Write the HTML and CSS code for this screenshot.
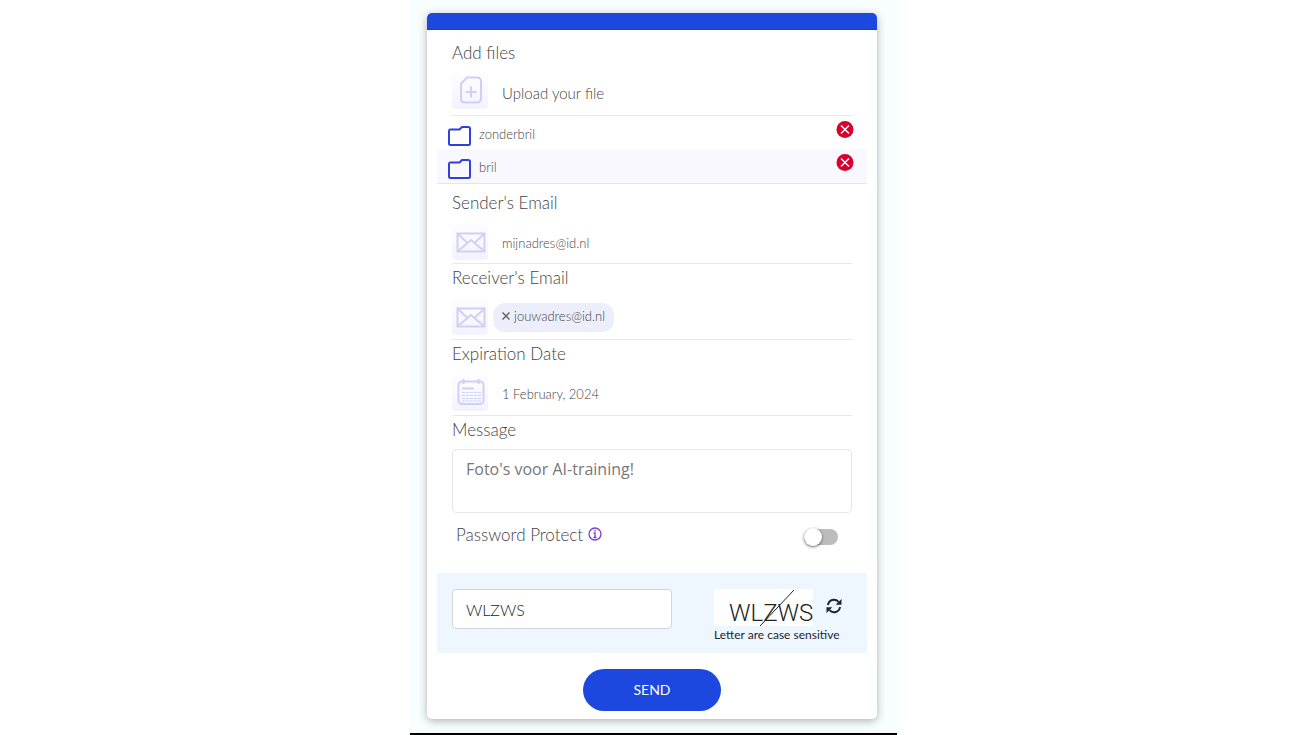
FILE: index.html
```html
<!DOCTYPE html>
<html lang="en">
<head>
    <meta charset="utf-8">
    <meta name="viewport" content="width=device-width,initial-scale=1.0">
    <title>Send files</title>
    <link rel="stylesheet" href="styles.css">
</head>
<body>
<!-- shared icons -->
<svg class="sprite" aria-hidden="true">
    <symbol id="mail" viewBox="0 0 36 36">
        <rect x="5.5" y="9.5" width="27" height="18"/>
        <path d="M6 10l9.500 9 3.500-3 3.500 3L32 10M6 27l9.500-8M32 27l-9.500-8"/>
    </symbol>
    <symbol id="folder" viewBox="0 0 24 22">
        <path d="M3 4.500h9.500l2.500-2.500h6Q23 2 23 3.500V18.500Q23 20 21.500 20H3.500Q2 20 2 18.500V6Q2 4.500 3 4.500z"/>
    </symbol>
    <symbol id="remove" viewBox="0 0 18 18">
        <circle cx="9" cy="8.500" r="8.500" fill="#d9002b"/>
        <path d="M5 4.500l8 8M13 4.500l-8 8" stroke="#fff" stroke-width="1.500"/>
    </symbol>
</svg>

<main class="wrap">
    <form class="card">
        <div class="card-top"></div>
        <div class="card-body">

            <div class="field field-upload">
                <h2 class="title">Add files</h2>
                <label class="row" for="file">
                    <span class="icon">
                        <svg viewBox="0 0 36 36">
                            <path d="M15 4.500h10q4 0 4 4v17q0 4-4 4H13q-4 0-4-4V11z"/>
                            <path d="M19 13.500v11M13.500 19h11"/>
                        </svg>
                    </span>
                    <span class="upload-txt">Upload your file</span>
                </label>
                <input class="file" type="file" id="file" multiple>
            </div>

            <ul class="files">
                <li>
                    <svg class="folder"><use href="#folder"/></svg>
                    <span>zonderbril</span>
                    <button class="del" type="button" aria-label="Remove zonderbril"><svg><use href="#remove"/></svg></button>
                </li>
                <li>
                    <svg class="folder"><use href="#folder"/></svg>
                    <span>bril</span>
                    <button class="del" type="button" aria-label="Remove bril"><svg><use href="#remove"/></svg></button>
                </li>
            </ul>

            <div class="field field-sender">
                <label class="title" for="sender">Sender's Email</label>
                <div class="row">
                    <span class="icon"><svg><use href="#mail"/></svg></span>
                    <input class="txt" type="email" id="sender" value="mijnadres@id.nl">
                </div>
            </div>

            <div class="field">
                <h2 class="title">Receiver's Email</h2>
                <div class="row">
                    <span class="icon"><svg><use href="#mail"/></svg></span>
                    <span class="tag">
                        <button type="button" aria-label="Remove jouwadres@id.nl">
                            <svg viewBox="0 0 8 8"><path d="M0.500 0.500l7 7M7.500 0.500l-7 7"/></svg>
                        </button>
                        jouwadres@id.nl
                    </span>
                </div>
            </div>

            <div class="field">
                <label class="title" for="date">Expiration Date</label>
                <div class="row">
                    <span class="icon">
                        <svg viewBox="0 0 36 36">
                            <rect x="6.500" y="6.500" width="25" height="22.500" rx="3.500"/>
                            <path d="M11.500 4v5M26.500 4v5M10 13.500h12"/>
                            <path class="days" d="M10 17.500h19M10 20.500h19M10 23.500h19M10 26h19"/>
                        </svg>
                    </span>
                    <input class="txt" type="text" id="date" value="1 February, 2024">
                </div>
            </div>

            <div class="field field-msg">
                <label class="title" for="msg">Message</label>
                <textarea id="msg">Foto's voor AI-training!</textarea>
            </div>

            <div class="protect">
                <label for="protect">Password Protect</label>
                <svg class="info" viewBox="0 0 14 14">
                    <circle cx="7" cy="7" r="6"/>
                    <path d="M5.500 6h1.500v4M5.500 10.500h3M7 3v1.500"/>
                </svg>
                <input class="switch" type="checkbox" id="protect">
            </div>

            <div class="captcha">
                <input class="code" type="text" aria-label="Captcha" value="WLZWS">
                <div class="captcha-side">
                    <div class="captcha-row">
                        <svg class="captcha-pic" viewBox="0 0 99 37">
                            <text x="15" y="32">WLZWS</text>
                            <path d="M46 37L80 1"/>
                        </svg>
                        <button class="refresh" type="button" aria-label="Refresh">
                            <svg viewBox="0 0 16 16">
                                <path class="arc" d="M2 7a6 6 0 0 1 10.500-3.200M14 9a6 6 0 0 1-10.500 3.200"/>
                                <path class="head" d="M15.500 1v5.800H9.700zM0.500 15V9.200h5.800z"/>
                            </svg>
                        </button>
                    </div>
                    <p>Letter are case sensitive</p>
                </div>
            </div>

            <button class="send" type="submit">SEND</button>
        </div>
    </form>
</main>
</body>
</html>
```
FILE: styles.css
```css
* {
    box-sizing: border-box;
}

body {
    margin: 0;
    background: #fff;
    color: #444;
    font-family: Lato, "Liberation Sans", sans-serif;
    font-size: 13px;
    font-weight: 300;
}

h2, p, ul {
    margin: 0;
    padding: 0;
}

button, input, textarea {
    font-family: inherit;
    font-weight: inherit;
    color: inherit;
}

button {
    padding: 0;
    border: 0;
    background: none;
    cursor: pointer;
}

svg {
    display: block;
    fill: none;
}

.sprite {
    position: absolute;
    width: 0;
    height: 0;
}

.wrap {
    max-width: 487px;
    min-height: 100vh;
    margin: 0 auto;
    padding: 13px 20px 14px 17px;
    background: #f8fdff;
    border-bottom: 2px solid #000;
}

.card {
    background: #fff;
    border-radius: 5px;
    box-shadow: 0 2px 8px rgba(0, 0, 0, .3);
    overflow: hidden;
}

.card-top {
    height: 17px;
    background: #1c48e0;
    border-bottom: 1px solid #1b3fc0;
}

.card-body {
    padding: 0 10px 8px;
}

/* fields */
.field {
    margin: 0 15px;
    padding: 2px 0 4px;
    border-bottom: 1px solid #e9e9e9;
}

.field-upload {
    padding: 11px 0 6px;
}

.field-sender {
    padding: 7px 0 3px;
}

.title {
    display: block;
    margin-bottom: 9px;
    font-size: 17px;
    font-weight: 300;
    line-height: 24px;
}

.field-upload .title {
    margin-bottom: 8px;
}

.field-msg .title {
    margin-bottom: 7px;
}

.row {
    display: flex;
    align-items: center;
}

.icon {
    flex: none;
    width: 36px;
    height: 36px;
    border-radius: 4px;
    background: linear-gradient(#fdfdff, #f3f3ff);
}

.icon svg {
    width: 36px;
    height: 36px;
    stroke: #cfd0f3;
    stroke-width: 2;
}

.icon .days {
    stroke-width: 1;
    stroke-dasharray: 3 1;
}

.upload-txt {
    margin-left: 14px;
    padding-top: 3px;
    font-size: 15px;
    line-height: 20px;
}

.file {
    position: absolute;
    width: 1px;
    height: 1px;
    opacity: 0;
}

.txt {
    flex: 1;
    min-width: 0;
    height: 36px;
    padding: 2px 14px 0;
    border: 0;
    background: none;
    font-size: 13px;
}

/* uploaded files */
.files {
    list-style: none;
    border-bottom: 1px solid #e6e6ea;
}

.files li {
    display: flex;
    align-items: flex-start;
    height: 33px;
    padding: 5px 13px 0 10px;
}

.files li:nth-child(even) {
    height: 34px;
    background: #faf8ff;
}

.files span {
    flex: 1;
    margin-left: 8px;
    line-height: 26px;
}

.folder {
    width: 24px;
    height: 22px;
    margin-top: 4px;
    stroke: #2f3fe0;
    stroke-width: 2;
}

.del svg {
    width: 18px;
    height: 18px;
}

.tag {
    display: flex;
    align-items: center;
    height: 29px;
    margin-left: 5px;
    padding: 0 9px 2px;
    border-radius: 12px;
    background: #eceefc;
}

.tag svg {
    width: 8px;
    height: 8px;
    margin-right: 4px;
    stroke: #666;
    stroke-width: 1.5;
}

.field-msg {
    padding-bottom: 0;
    border-bottom: 0;
}

.field-msg textarea {
    display: block;
    width: 100%;
    height: 64px;
    padding: 7px 13px;
    border: 1px solid #e6e6e6;
    border-radius: 4px;
    color: #777;
    font-family: "Open Sans", "Noto Sans", sans-serif;
    font-size: 16px;
    font-weight: 400;
    line-height: 24px;
    resize: none;
}

.protect {
    display: flex;
    align-items: center;
    height: 24px;
    margin: 9px 29px 27px 19px;
    font-size: 17px;
}

.info {
    width: 14px;
    height: 14px;
    margin-left: 5px;
    stroke: #7a3fd0;
    stroke-width: 1.3;
}

.switch {
    appearance: none;
    display: flex;
    align-items: center;
    width: 34px;
    height: 16px;
    margin: 5px 0 0 auto;
    border-radius: 8px;
    background: #bdbdbd;
}

.switch:before {
    content: "";
    width: 18px;
    height: 18px;
    border-radius: 50%;
    background: #fff;
    box-shadow: 0 1px 3px rgba(0, 0, 0, .6);
}

/* captcha */
.captcha {
    display: flex;
    justify-content: space-between;
    align-items: flex-start;
    height: 80px;
    padding: 16px 25px 0 15px;
    background: #eef6ff;
}

.code {
    width: 220px;
    height: 40px;
    padding: 0 13px;
    border: 1px solid #ced4da;
    border-radius: 4px;
    background: #fff;
    color: #222;
    font-size: 16px;
}

.captcha-side {
    width: 128px;
}

.captcha-row {
    display: flex;
    justify-content: space-between;
}

.captcha-pic {
    width: 99px;
    height: 37px;
    background: #fff;
    stroke: #222;
}

.captcha-pic text {
    fill: #222;
    stroke: none;
    font-family: Roboto, sans-serif;
    font-size: 24px;
    font-weight: 300;
}

.refresh {
    width: 16px;
    height: 34px;
}

.refresh .arc {
    stroke: #212529;
    stroke-width: 2;
}

.refresh .head {
    fill: #212529;
}

.captcha p {
    color: #212529;
    font-size: 12px;
    font-weight: 400;
    line-height: 18px;
}

.send {
    display: block;
    width: 138px;
    height: 42px;
    margin: 16px auto 0;
    padding-bottom: 2px;
    border-radius: 21px;
    background: #1c48e0;
    color: #fff;
    font-size: 14px;
    font-weight: 400;
}
```
